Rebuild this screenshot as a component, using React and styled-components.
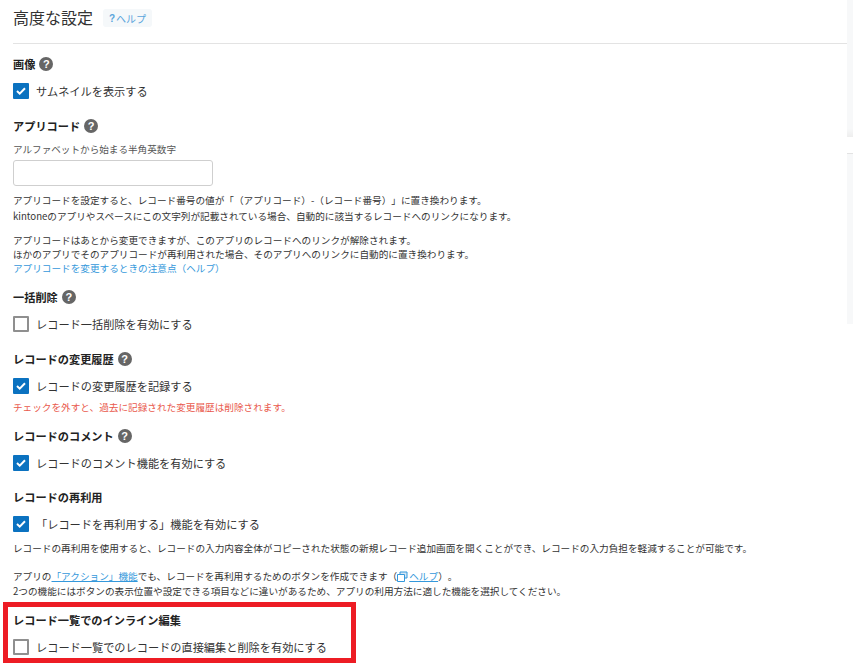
import styled, { createGlobalStyle } from "styled-components";

const GlobalStyle = createGlobalStyle`
  html, body {
    margin: 0;
    padding: 0;
    background: #fff;
    overflow: hidden;
  }
  body {
    font-family: "Noto Sans CJK JP", "Noto Sans", sans-serif;
    color: #333;
    text-spacing-trim: space-all;
  }
`;

const QuestionBadge = () => <HelpDot>?</HelpDot>;

const Check = ({ checked }) => (
  <Box $checked={checked}>
    {checked && (
      <svg width="10" height="8" viewBox="0 0 10 8">
        <path d="M1 4l2.7 2.6L9 1.2" fill="none" stroke="#fff" strokeWidth="2" />
      </svg>
    )}
  </Box>
);

const Option = ({ checked, children }) => (
  <OptionRow>
    <Check checked={checked} />
    <OptionLabel>{children}</OptionLabel>
  </OptionRow>
);

const App = () => {
  return (
    <Page>
      <GlobalStyle />
      <Main>
        <Header>
          <Title>高度な設定</Title>
          <HelpButton><b>?</b>ヘルプ</HelpButton>
        </Header>

        <Section $top={11}>
          <Heading>画像 <QuestionBadge /></Heading>
          <Option checked>サムネイルを表示する</Option>
        </Section>

        <Section $top={17}>
          <Heading>アプリコード <QuestionBadge /></Heading>
          <Hint>アルファベットから始まる半角英数字</Hint>
          <CodeInput />
          <Para $top={6} $line={16}>
            アプリコードを設定すると、レコード番号の値が「（アプリコード）-（レコード番号）」に置き換わります。<br />
            kintoneのアプリやスペースにこの文字列が記載されている場合、自動的に該当するレコードへのリンクになります。
          </Para>
          <Para $top={9} $line={14}>
            アプリコードはあとから変更できますが、このアプリのレコードへのリンクが解除されます。<br />
            ほかのアプリでそのアプリコードが再利用された場合、そのアプリへのリンクに自動的に置き換わります。<br />
            <TextLink>アプリコードを変更するときの注意点（ヘルプ）</TextLink>
          </Para>
        </Section>

        <Section $top={13}>
          <Heading>一括削除 <QuestionBadge /></Heading>
          <Option>レコード一括削除を有効にする</Option>
        </Section>

        <Section $top={17}>
          <Heading>レコードの変更履歴 <QuestionBadge /></Heading>
          <Option checked>レコードの変更履歴を記録する</Option>
          <Warning>チェックを外すと、過去に記録された変更履歴は削除されます。</Warning>
        </Section>

        <Section $top={13}>
          <Heading>レコードのコメント <QuestionBadge /></Heading>
          <Option checked>レコードのコメント機能を有効にする</Option>
        </Section>

        <Section $top={16}>
          <Heading>レコードの再利用</Heading>
          <Option checked>「レコードを再利用する」機能を有効にする</Option>
          <Para $top={7} $line={16}>
            レコードの再利用を使用すると、レコードの入力内容全体がコピーされた状態の新規レコード追加画面を開くことができ、レコードの入力負担を軽減することが可能です。
          </Para>
          <Para $top={13} $line={15}>
            アプリの<UnderLink>「アクション」機能</UnderLink>でも、レコードを再利用するためのボタンを作成できます（
            <ExternalIcon width="11" height="11" viewBox="0 0 11 11">
              <path d="M3 1h7v6H3z" fill="#d7e7f5" stroke="#3498db" />
              <path d="M.5 3.5h7v7h-7z" fill="#fff" stroke="#3498db" />
            </ExternalIcon>
            <UnderLink>ヘルプ</UnderLink>）。<br />
            2つの機能にはボタンの表示位置や設定できる項目などに違いがあるため、アプリの利用方法に適した機能を選択してください。
          </Para>
        </Section>

        <Highlight>
          <Heading>レコード一覧でのインライン編集</Heading>
          <Option>レコード一覧でのレコードの直接編集と削除を有効にする</Option>
        </Highlight>
      </Main>
      <SideEdge>
        <EdgeTop />
        <EdgeBottom />
      </SideEdge>
    </Page>
  );
};

export default App;

const Page = styled.div`
  display: flex;
  width: 853px;
  height: 666px;
  overflow: hidden;
`;

const Main = styled.div`
  width: 834px;
  padding-left: 13px;
`;

const SideEdge = styled.div`
  width: 6px;
  display: flex;
  flex-direction: column;
`;

const EdgeTop = styled.div`
  height: 137px;
  background: linear-gradient(#f7f8f9 94%, #eeeeee);
`;

const EdgeBottom = styled.div`
  height: 170px;
  margin-top: 16px;
  border-top: 1px solid #e3e3e3;
  background: #f7f8f9;
`;

const Header = styled.div`
  display: flex;
  align-items: flex-start;
  gap: 10px;
  box-sizing: border-box;
  height: 44px;
  padding-top: 5px;
  border-bottom: 1px solid #e3e3e3;
`;

const Title = styled.h1`
  margin: 0;
  font-size: 16px;
  font-weight: 400;
  line-height: 24px;
  color: #333;
`;

const HelpButton = styled.span`
  display: flex;
  align-items: center;
  justify-content: center;
  gap: 1px;
  width: 49px;
  height: 18px;
  margin-top: 4px;
  border-radius: 3px;
  background: #f5f8fa;
  color: #5aa5dc;
  font-size: 10px;
  b {
    font-family: "Liberation Sans", sans-serif;
    font-size: 10px;
  }
`;

const Section = styled.section`
  margin-top: ${({ $top }) => $top}px;
`;

const Heading = styled.h2`
  display: flex;
  align-items: center;
  gap: 4px;
  margin: 0;
  height: 18px;
  font-size: 11.2px;
  font-weight: 700;
  color: #222;
`;

const HelpDot = styled.span`
  display: inline-flex;
  align-items: center;
  justify-content: center;
  width: 14px;
  height: 14px;
  border-radius: 50%;
  background: #666;
  color: #fff;
  font-family: "Liberation Sans", sans-serif;
  font-size: 11px;
  font-weight: 700;
`;

const OptionRow = styled.div`
  display: flex;
  align-items: center;
  gap: 7px;
  height: 18px;
  margin-top: 9px;
`;

const Box = styled.span`
  display: flex;
  align-items: center;
  justify-content: center;
  flex: none;
  box-sizing: border-box;
  width: 16px;
  height: 16px;
  border-radius: 1px;
  background: ${({ $checked }) => ($checked ? "#0b72c0" : "#fff")};
  border: ${({ $checked }) => ($checked ? "none" : "2px solid #8f8f8f")};
`;

const OptionLabel = styled.span`
  font-size: 11.2px;
  color: #333;
  white-space: nowrap;
`;

const Hint = styled.div`
  margin-top: 7px;
  font-size: 9.6px;
  line-height: 14px;
  color: #555;
`;

const CodeInput = styled.div`
  box-sizing: border-box;
  width: 200px;
  height: 26px;
  margin-top: 4px;
  border: 1px solid #cfcfcf;
  border-radius: 3px;
`;

const Para = styled.p`
  margin: ${({ $top }) => $top}px 0 0;
  font-size: 9.65px;
  line-height: ${({ $line }) => $line}px;
  color: #333;
  white-space: nowrap;
`;

const TextLink = styled.span`
  color: #3498db;
`;

const UnderLink = styled.span`
  color: #3498db;
  text-decoration: underline;
`;

const ExternalIcon = styled.svg`
  vertical-align: -2px;
  margin-right: 1px;
`;

const Warning = styled.div`
  margin-top: 5px;
  font-size: 9.65px;
  line-height: 14px;
  color: #e9594c;
`;

const Highlight = styled.section`
  box-sizing: border-box;
  width: 353px;
  height: 61px;
  margin: 3px 0 0 -10px;
  padding: 4px 0 0 5px;
  border: 5px solid #ed1c24;
`;
